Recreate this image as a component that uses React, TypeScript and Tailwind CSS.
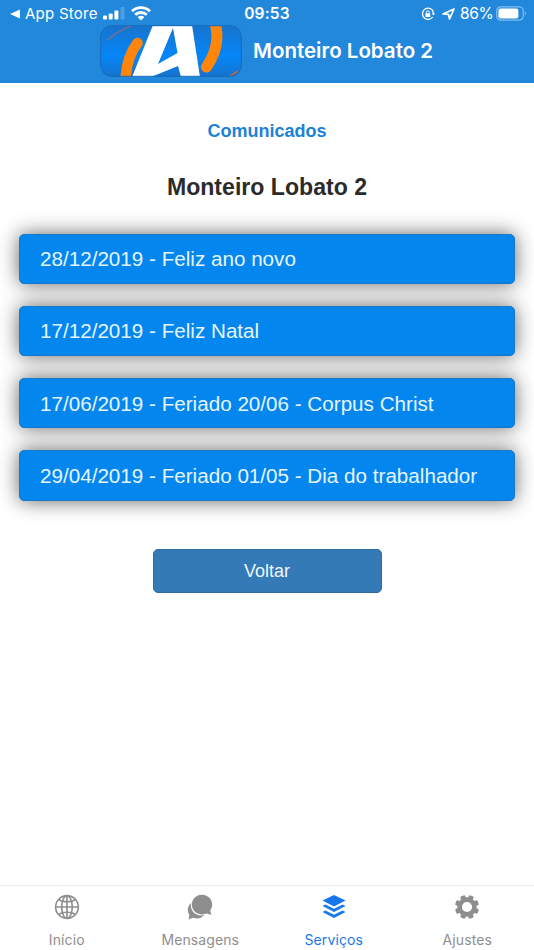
import { IoIosGlobe, IoIosChatbubbles } from 'react-icons/io'

const notices = [
  { date: '28/12/2019', title: 'Feliz ano novo' },
  { date: '17/12/2019', title: 'Feliz Natal' },
  { date: '17/06/2019', title: 'Feriado 20/06 - Corpus Christ' },
  { date: '29/04/2019', title: 'Feriado 01/05 - Dia do trabalhador' },
]

const teeth = [0, 45, 90, 135, 180, 225, 270, 315]

function GearIcon({ className }: { className?: string }) {
  return (
    <svg viewBox="0 0 30 30" className={className} fill="currentColor">
      {teeth.map(angle => (
        <rect key={angle} transform={`rotate(${angle + 22.5} 15 15)`} x="12.4" y="2.9" width="5.2" height="6" rx="1.5" />
      ))}
      <circle cx="15" cy="15" r="7.4" fill="none" stroke="currentColor" strokeWidth="4.6" />
    </svg>
  )
}

function LayersIcon({ className }: { className?: string }) {
  return (
    <svg viewBox="0 0 30 30" className={className} fill="currentColor">
      <path d="M15 3 26.5 8.6 15 14.4 3.5 8.6Z" />
      <path d="M3.5 14 6.4 12.6 15 16.8 23.6 12.6 26.5 14 15 20Z" />
      <path d="M3.5 20 6.4 18.6 15 22.8 23.6 18.6 26.5 20 15 26Z" />
    </svg>
  )
}

const tabs = [
  { label: 'Início', icon: IoIosGlobe, active: false },
  { label: 'Mensagens', icon: IoIosChatbubbles, active: false },
  { label: 'Serviços', icon: LayersIcon, active: true },
  { label: 'Ajustes', icon: GearIcon, active: false },
]

function StatusBar() {
  return (
    <div className="grid h-[25px] grid-cols-[1fr_auto_1fr] items-center pt-[2px] pr-[7px] pl-[10px] text-[15px] leading-none">
      <div className="flex items-center">
        <svg width="10" height="10" viewBox="0 0 10 10" fill="currentColor">
          <path d="M0 5 10 .5v9Z" />
        </svg>
        <span className="ml-[5px] w-[73px] text-[15px] tracking-[0.25px] whitespace-nowrap">App Store</span>
        <svg className="ml-[5px]" width="22" height="13" viewBox="0 0 22 13" fill="currentColor">
          <rect x="0" y="8.5" width="4" height="4" rx="1" />
          <rect x="5.7" y="6.5" width="4" height="6" rx="1" />
          <rect x="11.4" y="3.5" width="4" height="9" rx="1" />
          <rect x="17.5" y="0" width="4" height="12.5" rx="1" opacity=".2" />
        </svg>
        <svg className="ml-[6px]" width="20" height="15" viewBox="0 0 20 15" fill="none" stroke="currentColor" strokeWidth="2.8">
          <path d="M1 5.2a13 13 0 0 1 18 0M4.2 8.8a8.500 8.500 0 0 1 11.6 0" />
          <path d="M10 14.5 6.7 11.2a4.7 4.7 0 0 1 6.6 0Z" fill="currentColor" stroke="none" />
        </svg>
      </div>
      <span className="mr-[3px] pt-[1px] text-[15.5px] font-semibold tracking-[0.2px]">09:53</span>
      <div className="flex items-center justify-end">
        <svg width="14" height="14" viewBox="0 0 14 14" fill="none" stroke="currentColor" strokeWidth="1.3">
          <path d="M11 2.8A5.6 5.6 0 1 0 11.7 10M11 2.8Q12.5 4.5 12.5 7" />
          <path d="m10.8 6.2 1.7 2.2 1.5-2.2Z" fill="currentColor" stroke="none" />
          <rect x="4.4" y="6.3" width="4.9" height="3.7" rx=".5" fill="currentColor" stroke="none" />
          <path d="M5.4 6.5V5.3a1.5 1.5 0 0 1 3 0v1.2" strokeWidth="1" />
        </svg>
        <svg className="ml-[7px]" width="13" height="12" viewBox="0 0 13 12" fill="none" stroke="currentColor" strokeWidth="1.7" strokeLinejoin="round">
          <path d="M1 6 12 1 7.5 11 6.5 6.3Z" />
        </svg>
        <span className="ml-[5px] w-[33px] pt-[1px] text-[15.5px] tracking-[-0.3px] whitespace-nowrap">86%</span>
        <svg className="ml-[3px]" width="31" height="15" viewBox="0 0 31 15">
          <rect x=".7" y=".8" width="26.5" height="13.4" rx="4" fill="none" stroke="#82bdf0" strokeWidth="1.2" />
          <rect x="2.4" y="2.5" width="20" height="10" rx="2.2" fill="#fff" />
          <path d="M28.7 5.2Q31 7.5 28.7 9.8Z" fill="#82bdf0" />
        </svg>
      </div>
    </div>
  )
}

function Logo() {
  return (
    <svg width="142" height="52" viewBox="0 0 142 52">
      <defs>
        <linearGradient id="logoBg" x1="0" y1="0" x2="0" y2="1">
          <stop offset="0" stopColor="#1873cc" />
          <stop offset=".6" stopColor="#0586f8" />
          <stop offset="1" stopColor="#1672cb" />
        </linearGradient>
        <clipPath id="logoClip">
          <rect x="1" y="1" width="140" height="50.5" rx="11" />
        </clipPath>
      </defs>
      <g clipPath="url(#logoClip)">
        <rect width="142" height="52" fill="url(#logoBg)" />
        <path d="M7 15Q18 6 33 0" fill="none" stroke="#8a6c87" strokeWidth="1.2" />
        <path d="M129 52 138 46" stroke="#b76655" strokeWidth="2" />
        <path d="M25.5 56Q26 33 37.5 18" fill="none" stroke="#ff850b" strokeWidth="10.5" strokeLinecap="round" />
        <path d="M114.5 -4Q122 20 106.500 42" fill="none" stroke="#ff850b" strokeWidth="11" strokeLinecap="round" />
        <path fillRule="evenodd" d="M53 0H92L100 52H81L78 41 51 52H32Z M73 3 58 39 77.500 28Z" fill="#fff" />
      </g>
      <rect x=".7" y=".7" width="140.6" height="50.6" rx="11" fill="none" stroke="#1769b8" />
    </svg>
  )
}

export default function App() {
  return (
    <div className="flex h-[950px] w-[534px] flex-col overflow-hidden bg-white font-['Inter',sans-serif]">
      <header className="h-[82.5px] shrink-0 bg-[#2288db] text-white">
        <StatusBar />
        <div className="flex items-center pl-[100px]">
          <Logo />
          <h1 className="ml-[11px] text-[20.5px] font-semibold tracking-[0px] whitespace-nowrap">Monteiro Lobato 2</h1>
        </div>
      </header>

      <main className="flex flex-1 flex-col items-center px-[19px] font-['Liberation_Sans',sans-serif]">
        <h2 className="mt-[36px] text-[18px] leading-6 font-bold text-[#1c82d7]">Comunicados</h2>
        <h3 className="mt-[28px] text-[23.1px] leading-8 font-bold text-[#2b2b2b]">Monteiro Lobato 2</h3>

        <ul className="mt-[31px] flex w-full flex-col gap-[22px]">
          {notices.map(({ date, title }) => (
            <li
              key={date}
              className="flex h-[50.3px] items-center rounded-[5px] border border-[#1978c8] bg-[#0486ef] pt-[2px] pl-[20px] text-[20.65px] whitespace-nowrap text-[#e4f5ff] shadow-[0_0_20px_rgba(0,0,0,0.6)]"
            >
              {date} - {title}
            </li>
          ))}
        </ul>

        <button className="mt-[48px] h-[44px] w-[229px] rounded-[5px] border border-[#2e6da4] bg-[#337ab7] pt-[2px] text-[18px] text-[#eef7ff]">
          Voltar
        </button>
      </main>

      <nav className="grid h-[65px] shrink-0 grid-cols-4 border-t border-[#ececec]">
        {tabs.map(({ label, icon: Icon, active }) => (
          <a key={label} className={`flex flex-col items-center pt-[6px] ${active ? 'text-[#1778ee]' : 'text-[#8e8e8e]'}`}>
            <Icon className="h-[30px] w-[30px]" />
            <span className="mt-[9px] text-[14px] leading-[18px] tracking-[0.1px]">{label}</span>
          </a>
        ))}
      </nav>
    </div>
  )
}
